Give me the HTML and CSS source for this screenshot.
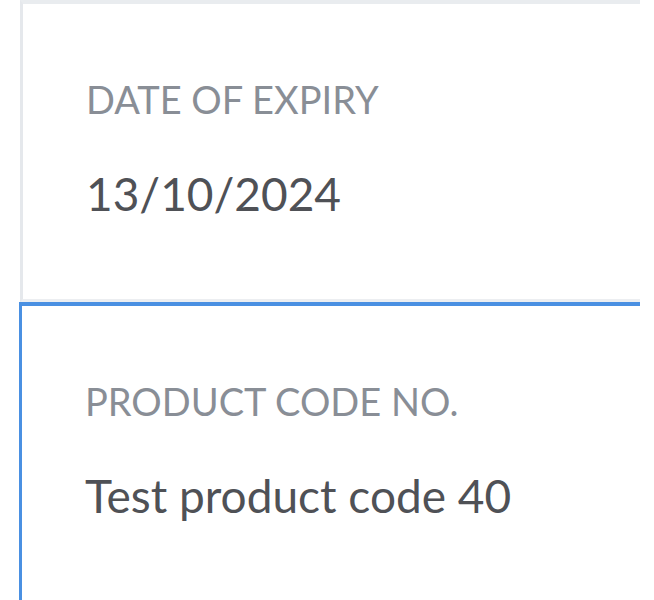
FILE: index.html
```html
<!DOCTYPE html>
<html lang="en">
<head>
  <meta charset="UTF-8" />
  <meta name="viewport" content="width=device-width, initial-scale=1" />
  <title>Product details</title>
  <link rel="stylesheet" href="styles.css">
</head>
<body>

  <div class="detail-list">
    <div class="detail-item">
      <div class="detail-label">DATE OF EXPIRY</div>
      <div class="detail-value">13/10/2024</div>
    </div>
    <div class="detail-item active">
      <div class="detail-label">PRODUCT CODE NO.</div>
      <div class="detail-value">Test product code 40</div>
    </div>
  </div>

</body>
</html>
```

FILE: styles.css
```css
body {
  margin: 0;
  background: #ffffff;
  font-family: Lato, "Open Sans", sans-serif;
}
.detail-list {
  margin-left: 20px;
  width: 620px;
}
.detail-item {
  border-top: 4px solid #e9ecef;
  border-bottom: 3px solid #eceef1;
  border-left: 3px solid #e5e8ec;
  padding: 71px 0 77px 63px;
}
.detail-item.active {
  border-top-color: #4a90e2;
  border-left-color: #4a90e2;
  border-bottom: none;
  margin-left: -1px;
}
.detail-label {
  font-size: 38px;
  line-height: 48px;
  color: #898e96;
}
.detail-value {
  margin-top: 43px;
  font-size: 46px;
  line-height: 56px;
  color: #4f5156;
}
```
